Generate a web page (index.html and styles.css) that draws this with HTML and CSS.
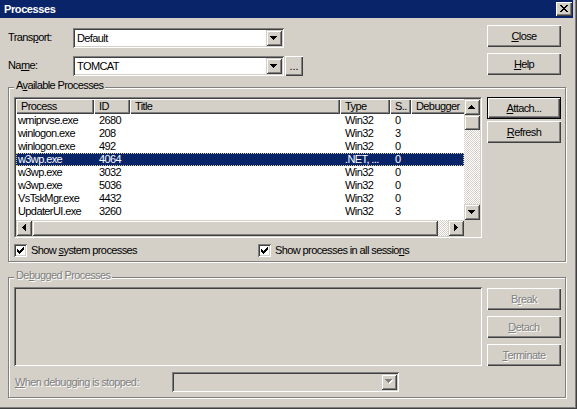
FILE: index.html
```html
<!DOCTYPE html>
<html>
<head>
<meta charset="utf-8">
<title>Processes</title>
<link rel="stylesheet" href="styles.css">
</head>
<body>
<div class="window">
  <div class="titlebar">
    <span class="title">Processes</span>
    <span class="tbtn">
      <svg width="8" height="7" viewBox="0 0 8 7" shape-rendering="crispEdges"><path d="M0 0h2v1h-2zM6 0h2v1h-2zM1 1h2v1h-2zM5 1h2v1h-2zM2 2h4v1h-4zM3 3h2v1h-2zM2 4h4v1h-4zM1 5h2v1h-2zM5 5h2v1h-2zM0 6h2v1h-2zM6 6h2v1h-2z" fill="#000"/></svg>
    </span>
  </div>
  <div class="content">
    <div class="toprow">
      <span class="lbl">Trans<u>p</u>ort:</span>
      <div class="combo combo-top">
        <span class="combo-text">Default</span>
        <span class="cbtn"><svg width="7" height="4" viewBox="0 0 7 4" shape-rendering="crispEdges"><path d="M0 0H7V1H6V2H5V3H4V4H3V3H2V2H1V1H0Z" fill="#000"/></svg></span>
      </div>
      <span class="spacer"></span>
      <button class="btn"><u>C</u>lose</button>
    </div>
    <div class="toprow second">
      <span class="lbl">Na<u>m</u>e:</span>
      <div class="combo combo-top">
        <span class="combo-text">TOMCAT</span>
        <span class="cbtn"><svg width="7" height="4" viewBox="0 0 7 4" shape-rendering="crispEdges"><path d="M0 0H7V1H6V2H5V3H4V4H3V3H2V2H1V1H0Z" fill="#000"/></svg></span>
      </div>
      <button class="btn dots">...</button>
      <span class="spacer"></span>
      <button class="btn"><u>H</u>elp</button>
    </div>

    <div class="group avail">
      <span class="glabel">A<u>v</u>ailable Processes</span>
      <div class="gbody">
        <div class="gleft">
          <div class="lv">
            <div class="lv-in">
              <div class="lv-main">
                <div class="lv-head">
                  <span class="hc c1">Process</span>
                  <span class="hc c2">ID</span>
                  <span class="hc c3">Title</span>
                  <span class="hc c4">Type</span>
                  <span class="hc c5">S..</span>
                  <span class="hc c6">Debugger</span>
                </div>
                <div class="row"><span class="c1">wmiprvse.exe</span><span class="c2">2680</span><span class="c3"></span><span class="c4">Win32</span><span class="c5">0</span></div>
                <div class="row"><span class="c1">winlogon.exe</span><span class="c2">208</span><span class="c3"></span><span class="c4">Win32</span><span class="c5">3</span></div>
                <div class="row"><span class="c1">winlogon.exe</span><span class="c2">492</span><span class="c3"></span><span class="c4">Win32</span><span class="c5">0</span></div>
                <div class="row sel"><span class="c1">w3wp.exe</span><span class="c2">4064</span><span class="c3"></span><span class="c4">.NET, ...</span><span class="c5">0</span></div>
                <div class="row"><span class="c1">w3wp.exe</span><span class="c2">3032</span><span class="c3"></span><span class="c4">Win32</span><span class="c5">0</span></div>
                <div class="row"><span class="c1">w3wp.exe</span><span class="c2">5036</span><span class="c3"></span><span class="c4">Win32</span><span class="c5">0</span></div>
                <div class="row"><span class="c1">VsTskMgr.exe</span><span class="c2">4432</span><span class="c3"></span><span class="c4">Win32</span><span class="c5">0</span></div>
                <div class="row"><span class="c1">UpdaterUI.exe</span><span class="c2">3260</span><span class="c3"></span><span class="c4">Win32</span><span class="c5">3</span></div>
                <div class="row"><span class="c1">System</span><span class="c2">4</span><span class="c3"></span><span class="c4">Win32</span><span class="c5">0</span></div>
              </div>
              <div class="vscroll">
                <span class="sbtn"><svg width="7" height="4" viewBox="0 0 7 4" shape-rendering="crispEdges"><path d="M3 0H4V1H5V2H6V3H7V4H0V3H1V2H2V1H3Z" fill="#000"/></svg></span>
                <span class="sthumb v"></span>
                <span class="track"></span>
                <span class="sbtn"><svg width="7" height="4" viewBox="0 0 7 4" shape-rendering="crispEdges"><path d="M0 0H7V1H6V2H5V3H4V4H3V3H2V2H1V1H0Z" fill="#000"/></svg></span>
              </div>
              <div class="hscroll">
                <span class="sbtn"><svg width="4" height="7" viewBox="0 0 4 7" shape-rendering="crispEdges"><path d="M3 0H4V7H3V6H2V5H1V4H0V3H1V2H2V1H3Z" fill="#000"/></svg></span>
                <span class="sthumb h"></span>
                <span class="track"></span>
                <span class="sbtn"><svg width="4" height="7" viewBox="0 0 4 7" shape-rendering="crispEdges"><path d="M0 0H1V1H2V2H3V3H4V4H3V5H2V6H1V7H0Z" fill="#000"/></svg></span>
              </div>
              <div class="corner"></div>
            </div>
          </div>
          <div class="checks">
            <label class="chk first">
              <span class="box"><svg width="7" height="7" viewBox="0 0 7 7" shape-rendering="crispEdges"><path d="M6 0h1v3h-1zM5 1h1v3h-1zM4 2h1v3h-1zM3 3h1v3h-1zM2 4h1v3h-1zM1 3h1v3h-1zM0 2h1v3h-1z" fill="#000"/></svg></span>
              <span>Show <u>s</u>ystem processes</span>
            </label>
            <label class="chk">
              <span class="box"><svg width="7" height="7" viewBox="0 0 7 7" shape-rendering="crispEdges"><path d="M6 0h1v3h-1zM5 1h1v3h-1zM4 2h1v3h-1zM3 3h1v3h-1zM2 4h1v3h-1zM1 3h1v3h-1zM0 2h1v3h-1z" fill="#000"/></svg></span>
              <span>Show processes in all sessio<u>n</u>s</span>
            </label>
          </div>
        </div>
        <div class="bcol">
          <button class="btn default"><u>A</u>ttach...</button>
          <button class="btn"><u>R</u>efresh</button>
        </div>
      </div>
    </div>

    <div class="group debug">
      <span class="glabel dis">De<u>b</u>ugged Processes</span>
      <div class="gbody">
        <div class="gleft">
          <div class="dbox"></div>
        </div>
        <div class="bcol wide">
          <button class="btn dis">B<u>r</u>eak</button>
          <button class="btn dis"><u>D</u>etach</button>
          <button class="btn dis"><u>T</u>erminate</button>
        </div>
      </div>
      <div class="stoprow">
        <span class="slbl dis"><u>W</u>hen debugging is stopped:</span>
        <div class="combo combo-dis">
          <span class="combo-text"></span>
          <span class="cbtn"><svg width="8" height="5" viewBox="0 0 8 5" shape-rendering="crispEdges"><path d="M1 1H8V2H7V3H6V4H5V5H4V4H3V3H2V2H1Z" fill="#fff"/><path d="M0 0H7V1H6V2H5V3H4V4H3V3H2V2H1V1H0Z" fill="#808080"/></svg></span>
        </div>
      </div>
    </div>
  </div>
</div>
</body>
</html>
```

FILE: styles.css
```css
* { box-sizing: border-box; }
html, body { margin: 0; padding: 0; }
body {
  background: #d4d0c8;
  font: 11px/13px "Liberation Sans", Arial, sans-serif;
  letter-spacing: -0.6px;
  color: #000;
}
u { text-decoration: underline; text-underline-offset: 1px; }

.window {
  width: 577px;
  height: 409px;
  background: #d4d0c8;
  padding: 0 4px 4px 0;
  box-shadow: inset -1px -1px #404040, inset -2px -2px #808080;
  display: flex;
  flex-direction: column;
}

.titlebar {
  height: 18px;
  flex: none;
  background: #0a246a;
  display: flex;
  align-items: center;
  justify-content: space-between;
  padding: 0 1px 0 4px;
  color: #fff;
  font-weight: bold;
  line-height: 18px;
  letter-spacing: -0.4px;
}
.tbtn {
  width: 16px;
  height: 14px;
  background: #d4d0c8;
  box-shadow: inset 1px 1px #fff, inset -1px -1px #404040, inset -2px -2px #808080;
  display: flex;
  align-items: center;
  justify-content: center;
  padding: 0 1px 1px 0;
}
.tbtn svg, .cbtn svg, .sbtn svg, .box svg { display: block; }

.content {
  flex: 1;
  padding: 7px 7px 0 8px;
}

/* top rows */
.toprow {
  display: flex;
  align-items: flex-start;
  height: 23px;
}
.toprow.second { margin-top: 5px; }
.lbl {
  width: 65px;
  flex: none;
  margin-top: 6px;
}
.spacer { flex: 1; }

.combo {
  display: flex;
  align-items: stretch;
  height: 20px;
  padding: 2px;
  background: #fff;
  box-shadow: inset 1px 1px #808080, inset -1px -1px #fff, inset 2px 2px #404040, inset -2px -2px #d4d0c8;
}
.combo-top { width: 211px; margin-top: 3px; flex: none; }
.combo-text {
  flex: 1;
  padding-left: 2px;
  line-height: 16px;
  white-space: nowrap;
}
.cbtn {
  width: 16px;
  flex: none;
  background: #d4d0c8;
  box-shadow: inset 1px 1px #d4d0c8, inset -1px -1px #404040, inset 2px 2px #fff, inset -2px -2px #808080;
  display: flex;
  align-items: center;
  justify-content: center;
  padding: 0 1px 1px 0;
}

.btn {
  font: inherit;
  letter-spacing: inherit;
  color: #000;
  width: 74px;
  height: 22px;
  flex: none;
  margin: 0;
  padding: 0 0 1px;
  border: 0;
  background: #d4d0c8;
  box-shadow: inset 1px 1px #fff, inset -1px -1px #404040, inset -2px -2px #808080;
  text-align: center;
  line-height: 20px;
}
.btn.dots {
  width: 18px;
  height: 20px;
  margin: 3px 0 0 1px;
  line-height: 16px;
  letter-spacing: 0;
  padding: 0;
}
.btn.default {
  border: 1px solid #000;
  box-shadow: inset 1px 1px #fff, inset -1px -1px #404040, inset -2px -2px #808080;
  line-height: 18px;
}
.toprow .btn:last-child { margin-right: 5px; }

.dis {
  color: #808080;
  text-shadow: 1px 1px 0 #fff;
}
.btn.dis { color: #808080; }

/* group boxes */
.group {
  border: 1px solid #808080;
  box-shadow: inset 1px 1px #fff, 1px 1px #fff;
  padding: 0 4px 4px 5px;
}
.group.avail { margin-top: 11px; }
.group.debug { margin-top: 15px; padding-bottom: 5px; }
.glabel {
  display: block;
  width: max-content;
  margin-top: -9px;
  padding: 0 2px;
  background: #d4d0c8;
  line-height: 13px;
}
.gbody {
  display: flex;
  gap: 5px;
  align-items: flex-start;
  margin-top: 5px;
}
.gleft { width: 468px; flex: none; }
.bcol {
  display: flex;
  flex-direction: column;
  gap: 2px;
}
.bcol.wide { gap: 6px; margin-top: 1px; }

/* list view */
.lv {
  width: 468px;
  height: 141px;
  border: 1px solid;
  border-color: #808080 #fff #fff #808080;
}
.lv-in {
  height: 100%;
  border: 1px solid;
  border-color: #404040 #d4d0c8 #d4d0c8 #404040;
  background: #fff;
  display: grid;
  grid-template-columns: 448px 16px;
  grid-template-rows: 121px 16px;
}
.lv-main { overflow: hidden; }
.lv-head { display: flex; height: 15px; }
.hc {
  flex: none;
  background: #d4d0c8;
  box-shadow: inset 1px 1px #fff, inset -1px -1px #404040, inset -2px -2px #808080;
  padding-left: 5px;
  line-height: 15px;
  white-space: nowrap;
  overflow: hidden;
}
.c1 { width: 78px; }
.c2 { width: 36px; }
.c3 { width: 210px; }
.c4 { width: 50px; }
.c5 { width: 21px; }
.c6 { width: 60px; }
.row {
  display: flex;
  height: 13px;
  line-height: 13px;
  white-space: nowrap;
}
.row span { flex: none; padding-left: 5px; overflow: hidden; }
.row span.c1 { padding-left: 2px; }
.row.sel {
  background: #0a246a;
  color: #fff;
  outline: 1px dotted #d8d098;
  outline-offset: -1px;
}

.vscroll { display: flex; flex-direction: column; }
.hscroll { display: flex; }
.sbtn {
  width: 16px;
  height: 16px;
  flex: none;
  background: #d4d0c8;
  box-shadow: inset 1px 1px #d4d0c8, inset -1px -1px #404040, inset 2px 2px #fff, inset -2px -2px #808080;
  display: flex;
  align-items: center;
  justify-content: center;
  padding: 0 1px 1px 0;
}
.sthumb {
  flex: none;
  background: #d4d0c8;
  box-shadow: inset 1px 1px #d4d0c8, inset -1px -1px #404040, inset 2px 2px #fff, inset -2px -2px #808080;
}
.sthumb.v { width: 16px; height: 15px; }
.sthumb.h { height: 16px; width: 406px; }
.track {
  flex: 1;
  background: repeating-conic-gradient(#fff 0 25%, #d4d0c8 0 50%) 0 0 / 2px 2px;
}
.corner { background: #d4d0c8; }

/* checkboxes */
.checks {
  display: flex;
  margin-top: 6px;
  height: 13px;
}
.chk {
  display: flex;
  align-items: center;
  gap: 3px;
  white-space: nowrap;
}
.chk.first { width: 244px; }
.box {
  width: 13px;
  height: 13px;
  flex: none;
  background: #fff;
  box-shadow: inset 1px 1px #808080, inset -1px -1px #fff, inset 2px 2px #404040, inset -2px -2px #d4d0c8;
  padding: 3px;
  margin-right: 1px;
}

/* debugged processes */
.dbox {
  height: 79px;
  background: #d4d0c8;
  box-shadow: inset 1px 1px #808080, inset -1px -1px #fff, inset 2px 2px #404040, inset -2px -2px #d4d0c8;
}
.stoprow {
  display: flex;
  margin-top: 6px;
  height: 20px;
}
.slbl {
  width: 157px;
  margin-left: 1px;
  line-height: 20px;
}
.combo-dis {
  width: 227px;
  background: #d4d0c8;
}
```
